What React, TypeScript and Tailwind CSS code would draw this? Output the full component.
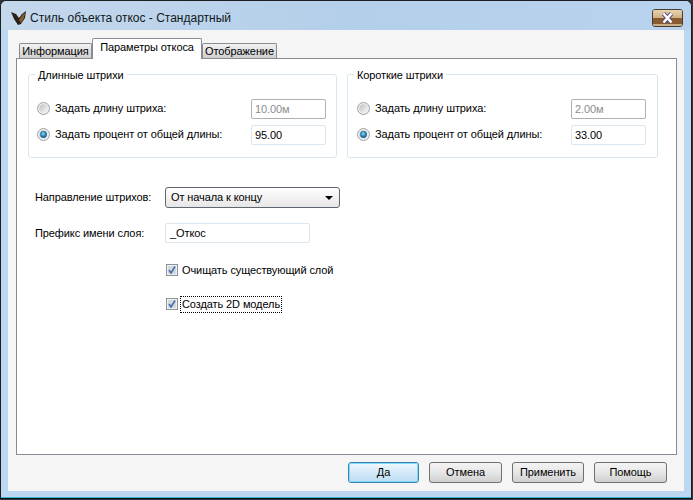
import React from "react";

const RadioRow = ({ label, checked, value, disabled }: { label: string; checked?: boolean; value: string; disabled?: boolean }) => (
  <div className="flex items-center h-[20px]">
    <svg width="13" height="13" viewBox="0 0 13 13" className="ml-[2px] -mt-[2px] shrink-0">
      <defs>
        <linearGradient id="radioFace" x1="0" y1="0" x2="1" y2="1">
          <stop offset="0" stopColor="#bdbdbd" />
          <stop offset="1" stopColor="#fafafa" />
        </linearGradient>
        <radialGradient id="radioDot" cx="0.45" cy="0.4" r="0.7">
          <stop offset="0" stopColor="#7fe4f8" />
          <stop offset="0.55" stopColor="#2a78b0" />
          <stop offset="1" stopColor="#0e3a60" />
        </radialGradient>
      </defs>
      <circle cx="6.5" cy="6.5" r="6" fill="#eeeeee" stroke="#9ea2a6" />
      <circle cx="6.5" cy="6.5" r="4.3" fill="url(#radioFace)" />
      {checked ? <circle cx="6.5" cy="6.5" r="3.4" fill="url(#radioDot)" /> : null}
    </svg>
    <span className="ml-[5px] w-[196px] shrink-0 -mt-[2px]">{label}</span>
    <div
      className={
        disabled
          ? "w-[75px] h-[20px] rounded-[2px] border border-[#afafaf] pl-[3px] leading-[18px] text-[#8c8c8c]"
          : "w-[75px] h-[20px] rounded-[2px] border border-[#dbe6ef] pl-[3px] leading-[18px] bg-white"
      }
    >
      {value}
    </div>
  </div>
);

const Group = ({ title, first, second, className }: { title: string; first: string; second: string; className: string }) => (
  <div className={`relative h-[84px] rounded-[3px] border border-[#d9e5ee] pt-[24px] ${className}`}>
    <span className="absolute left-[6px] top-[-7px] bg-white px-[3px] leading-[14px]">{title}</span>
    <RadioRow label="Задать длину штриха:" value={first} disabled />
    <div className="h-[6px]" />
    <RadioRow label="Задать процент от общей длины:" value={second} checked />
  </div>
);

const CheckRow = ({ label, focused }: { label: string; focused?: boolean }) => (
  <div className="flex items-center h-[16px] ml-[138px]">
    <svg width="12" height="12" viewBox="0 0 12 12" className="shrink-0">
      <rect x="0.5" y="0.5" width="11" height="11" fill="#eef0f2" stroke="#8e9399" />
      <rect x="2" y="2" width="8" height="8" fill="#d3d9df" />
      <path d="M3 6 L5 9 L9 2.5" fill="none" stroke="#4a6ea8" strokeWidth="1.6" />
    </svg>
    <span className={focused ? "ml-[3px] px-[1px] leading-[15px] outline-1 outline-dotted outline-black" : "ml-[4px]"}>{label}</span>
  </div>
);

const DlgButton = ({ label, primary, width }: { label: string; primary?: boolean; width: string }) => (
  <button
    className={
      primary
        ? `h-[21px] ${width} rounded-[3px] border border-[#3c7fb1] outline-1 -outline-offset-2 outline-[#7fdcf5] bg-gradient-to-b from-[#f0f8fd] via-[#d4e9f8] to-[#bcdcf4] text-center`
        : `h-[21px] ${width} rounded-[3px] border border-[#707070] bg-gradient-to-b from-[#f4f4f4] via-[#e6e6e6] to-[#d0d0d0] text-center`
    }
  >
    {label}
  </button>
);

export default function App() {
  return (
    <div
      className="w-[693px] h-[500px] bg-[#30363c] text-[11px] tracking-[-0.1px] text-black overflow-hidden"
      style={{ fontFamily: '"Liberation Sans", Arial, sans-serif' }}
    >
      <div className="w-[692px] h-[499px] rounded-t-[6px] border border-[#1c1f22] border-b-[#0c0f12] bg-[#bcd7f2] shadow-[inset_0_-1px_0_#3bb8d8] flex flex-col">
        {/* title bar */}
        <div className="h-[29px] shrink-0 rounded-t-[6px] bg-gradient-to-r from-[#c4d8ec] via-[#b4cfea] to-[#b9d3ee] flex items-center pt-[4px] pl-[10px] pr-[8px]">
          <svg width="16" height="16" viewBox="0 0 16 16" className="shrink-0">
            <path d="M0 2 L5 4 L8 8 L11 4 L15 1 L14 8 L10 14 L7 15 L3 9 Z" fill="#2a2019" />
            <path d="M8 10 L12 4 L14 3 L13 8 L10 13 Z" fill="#8a5a2c" />
          </svg>
          <span className="ml-[3px] text-[12px] tracking-normal text-[#101820]">Стиль объекта откос - Стандартный</span>
          <div className="ml-auto w-[31px] h-[18px] rounded-[3px] border border-[#4a3d30] overflow-hidden relative flex flex-col">
            <div className="h-[8px] bg-gradient-to-b from-[#e8d4b0] to-[#cdb084]" />
            <div className="h-[6px] bg-[#8a5a30]" />
            <div className="h-[2px] bg-[#c8ae84]" />
            <svg width="29" height="16" viewBox="0 0 29 16" className="absolute inset-0">
              <path d="M10.5 3.5 L18.5 12.5 M18.5 3.5 L10.5 12.5" stroke="#5a4a78" strokeWidth="4.5" />
              <path d="M10.5 3.5 L18.5 12.5 M18.5 3.5 L10.5 12.5" stroke="#ffffff" strokeWidth="2.6" />
            </svg>
          </div>
        </div>
        {/* client */}
        <div className="mx-[7px] h-[461px] bg-[#f5f5f5] flex flex-col px-[8px] pt-[8px]">
          <div className="flex items-end h-[20px] pl-[3px] relative z-10">
            <div className="w-[73px] h-[15px] border border-b-0 border-[#898c95] bg-gradient-to-b from-[#f2f2f2] to-[#cfcfcf] text-center leading-[15px] rounded-t-[2px]">Информация</div>
            <div className="w-[110px] h-[21px] -mb-[1px] border border-b-0 border-[#898c95] bg-white text-center leading-[17px] rounded-t-[2px]">Параметры откоса</div>
            <div className="w-[75px] h-[15px] border border-b-0 border-[#898c95] bg-gradient-to-b from-[#f2f2f2] to-[#cfcfcf] text-center leading-[15px] rounded-t-[2px]">Отображение</div>
          </div>
          <div className="w-[661px] h-[397px] border border-[#898c95] bg-white pt-[15px] pl-[11px]">
            <div className="flex">
              <Group title="Длинные штрихи" first="10.00м" second="95.00" className="w-[309px] mr-[10px] pl-[6px]" />
              <Group title="Короткие штрихи" first="2.00м" second="33.00" className="w-[311px] pl-[7px]" />
            </div>
            <div className="flex items-center h-[21px] mt-[29px] ml-[7px]">
              <span className="w-[130px]">Направление штрихов:</span>
              <div className="w-[175px] h-[21px] rounded-[3px] border border-[#5f6770] bg-gradient-to-b from-white to-[#e6e6e6] flex items-center pl-[5px] pr-[6px]">
                <span>От начала к концу</span>
                <span className="ml-auto w-0 h-0 border-x-[4px] border-x-transparent border-t-[4px] border-t-black" />
              </div>
            </div>
            <div className="flex items-center h-[20px] mt-[15px] ml-[7px]">
              <span className="w-[130px]">Префикс имени слоя:</span>
              <div className="w-[145px] h-[20px] rounded-[2px] border border-[#dbe6ef] pl-[4px] leading-[18px]">_Откос</div>
            </div>
            <div className="h-[19px]" />
            <CheckRow label="Очищать существующий слой" />
            <div className="h-[18px]" />
            <CheckRow label="Создать 2D модель" focused />
          </div>
          <div className="flex mt-[7px] ml-[332px] gap-[10px]">
            <DlgButton label="Да" primary width="w-[71px]" />
            <DlgButton label="Отмена" width="w-[73px]" />
            <DlgButton label="Применить" width="w-[72px]" />
            <DlgButton label="Помощь" width="w-[73px]" />
          </div>
        </div>
      </div>
    </div>
  );
}
